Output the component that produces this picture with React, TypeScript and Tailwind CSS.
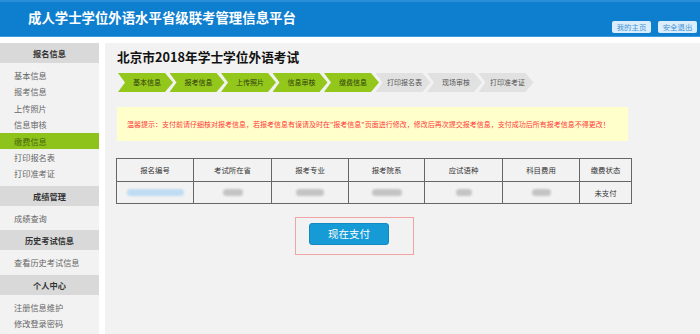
import React from "react";

const font = { fontFamily: '"Noto Sans CJK SC", "Noto Sans", sans-serif' };

const steps = [
  { t: "基本信息", done: true },
  { t: "报考信息", done: true },
  { t: "上传照片", done: true },
  { t: "信息审核", done: true },
  { t: "缴费信息", done: true },
  { t: "打印报名表", done: false },
  { t: "现场审核", done: false },
  { t: "打印准考证", done: false },
];

const sections = [
  {
    h: "报名信息",
    items: ["基本信息", "报考信息", "上传照片", "信息审核", "缴费信息", "打印报名表", "打印准考证"],
  },
  { h: "成绩管理", items: ["成绩查询"] },
  { h: "历史考试信息", items: ["查看历史考试信息"] },
  { h: "个人中心", items: ["注册信息维护", "修改登录密码"] },
];

const heads = ["报名编号", "考试所在省", "报考专业", "报考院系", "应试语种", "科目费用", "缴费状态"];

function Blob({ w, blue }: { w: number; blue?: boolean }) {
  return (
    <div
      className={`h-[7px] rounded-full blur-[1px] ${blue ? "bg-[#bfdcf3]" : "bg-[#c4c4c4]"}`}
      style={{ width: w }}
    />
  );
}

export default function App() {
  return (
    <div className="w-[700px] h-[334px] overflow-hidden bg-white flex flex-col" style={font}>
      {/* header */}
      <div className="h-[37px] shrink-0 bg-[#0e7ecf] border-t-2 border-t-[#2a8ed8] border-b border-b-[#3c9be0] flex items-center pl-[28px] pr-[3px]">
        <div className="text-white font-bold text-[13.4px] leading-none flex-1 -mt-[2px]">
          成人学士学位外语水平省级联考管理信息平台
        </div>
        <div className="flex gap-[7px] self-end mb-[3px]">
          <div className="w-[39px] h-[12px] rounded-[2px] bg-[#dcedfb] text-[#3d93d8] text-[7.4px] leading-[12px] text-center">
            我的主页
          </div>
          <div className="w-[39px] h-[12px] rounded-[2px] bg-[#dcedfb] text-[#3d93d8] text-[7.4px] leading-[12px] text-center">
            安全退出
          </div>
        </div>
      </div>

      <div className="flex flex-1 pt-[6px] gap-[6px]">
        {/* sidebar */}
        <div className="w-[99px] shrink-0 bg-[#f2f2f2]">
          {sections.map((s) => (
            <div key={s.h}>
              <div className="h-[20px] bg-[#d9d9d9] text-[#333] font-bold text-[8.2px] leading-[20px] text-center">
                {s.h}
              </div>
              <div className="py-[4px]">
                {s.items.map((it) => (
                  <div
                    key={it}
                    className={`h-[16.4px] leading-[16.4px] pl-[14px] text-[8.2px] ${
                      it === "缴费信息" ? "bg-[#8ec31c] text-[#4a6a10]" : "text-[#666]"
                    }`}
                  >
                    {it}
                  </div>
                ))}
              </div>
            </div>
          ))}
        </div>

        {/* main */}
        <div className="flex-1 bg-[#f2f2f2] pl-[12px] pt-[5px] flex flex-col">
          <div className="text-[12.7px] font-bold text-[#111] leading-[18px]">北京市2018年学士学位外语考试</div>

          <div className="flex mt-[7px] ml-[1px]">
            {steps.map((s, i) => (
              <div
                key={s.t}
                className={`w-[55px] h-[19px] flex items-center justify-center text-[7px] pl-[3px] [clip-path:polygon(0_0,calc(100%-8px)_0,100%_50%,calc(100%-8px)_100%,0_100%,7px_50%)] ${
                  s.done ? "bg-[#93c71b] text-[#2f3d10]" : "bg-[#e1e1e1] text-[#555]"
                } ${i > 0 ? "ml-[-3.5px]" : ""}`}
              >
                {s.t}
              </div>
            ))}
          </div>

          <div className="mt-[15px] w-[511px] h-[34px] bg-[#ffffcc] flex items-center pl-[10px] text-[#ff3a3a] text-[7px] whitespace-nowrap">
            温馨提示：支付前请仔细核对报考信息，若报考信息有误请及时在"报考信息"页面进行修改，修改后再次提交报考信息，支付成功后所有报考信息不得更改！
          </div>

          <table className="mt-[17px] -ml-[1px] border-collapse text-[7.4px] text-[#333]" style={{ width: 516 }}>
            <tbody>
              <tr className="h-[23px]">
                {heads.map((h, i) => (
                  <td
                    key={h}
                    className="border border-[#666] text-center p-0"
                    style={{ width: [77, 78, 77, 76, 78, 77, 52][i] }}
                  >
                    {h}
                  </td>
                ))}
              </tr>
              <tr className="h-[22px]">
                <td className="border border-[#666] p-0">
                  <div className="flex justify-center"><Blob w={57} blue /></div>
                </td>
                <td className="border border-[#666] p-0">
                  <div className="flex justify-center"><Blob w={20} /></div>
                </td>
                <td className="border border-[#666] p-0">
                  <div className="flex justify-center"><Blob w={28} /></div>
                </td>
                <td className="border border-[#666] p-0">
                  <div className="flex justify-center"><Blob w={30} /></div>
                </td>
                <td className="border border-[#666] p-0">
                  <div className="flex justify-center"><Blob w={16} /></div>
                </td>
                <td className="border border-[#666] p-0">
                  <div className="flex justify-center"><Blob w={19} /></div>
                </td>
                <td className="border border-[#666] p-0 text-center">未支付</td>
              </tr>
            </tbody>
          </table>

          <div className="mt-[13px] ml-[178px] w-[119px] h-[38px] border border-[#f0a4a4] pl-[13px] pt-[5px]">
            <div className="w-[80px] h-[22px] rounded-[3px] bg-[#179bd7] border border-[#1488c0] text-white text-[10.5px] flex items-center justify-center">
              现在支付
            </div>
          </div>
        </div>
      </div>
    </div>
  );
}
